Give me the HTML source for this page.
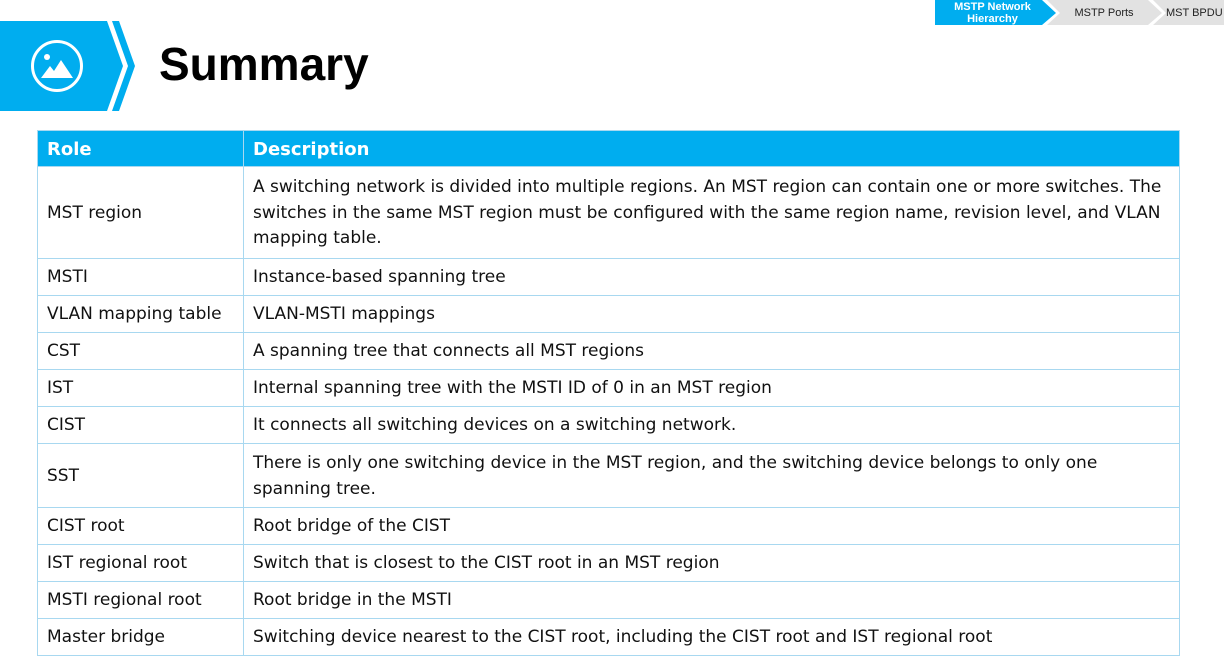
<!DOCTYPE html>
<html><head><meta charset="utf-8"><style>
body{margin:0;width:1224px;height:672px;background:#fff;font-family:"Liberation Sans","DejaVu Sans",sans-serif;position:relative;overflow:hidden}
.t{position:absolute;font-size:11px;color:#222;display:flex;align-items:center;justify-content:center;text-align:center;line-height:12px}
table{position:absolute;left:37px;top:130px;width:1143px;border-collapse:collapse;font-family:"DejaVu Sans",sans-serif;font-size:17px;color:#111}
td,th{border:1.5px solid #a8d8f0;padding:2px 9px 0 9px;text-align:left;vertical-align:middle;line-height:25.5px}
th{background:#00adef;color:#fff;font-weight:bold;font-size:18px;height:33px}
td:first-child,th:first-child{width:187px}
</style></head><body>
<svg style="position:absolute;left:0;top:0" width="1224" height="120">
<polygon points="935,0 1042,0 1056,13 1042,25 935,25" fill="#00adef"/>
<polygon points="1047,0 1148,0 1162,13 1148,25 1047,25 1060,13" fill="#e2e2e2"/>
<polygon points="1153,0 1224,0 1224,25 1153,25 1166,13" fill="#e2e2e2"/>
<polygon points="0,21 107,21 123,66 107,111 0,111" fill="#00adef"/>
<polygon points="112,21 119,21 135,66 119,111 112,111 128,66" fill="#00adef"/>
<circle cx="57" cy="66" r="24.5" fill="none" stroke="#fff" stroke-width="3"/>
<circle cx="47" cy="57" r="3" fill="#fff"/>
<polygon points="41,78 50,66 54,71 61,60 73,78" fill="#fff"/>
</svg>
<div class="t" style="left:940px;top:0;width:105px;height:25px;color:#fff;font-weight:bold">MSTP Network<br>Hierarchy</div>
<div class="t" style="left:1060px;top:0;width:88px;height:25px">MSTP Ports</div>
<div class="t" style="left:1166px;top:0;width:60px;height:25px;justify-content:flex-start">MST BPDU</div>
<div style="position:absolute;left:159px;top:37px;font-size:46px;font-weight:bold;color:#000">Summary</div>
<table>
<tr><th>Role</th><th>Description</th></tr>
<tr style="height:92px"><td>MST region</td><td>A switching network is divided into multiple regions. An MST region can contain one or more switches. The switches in the same MST region must be configured with the same region name, revision level, and VLAN mapping table.</td></tr>
<tr style="height:37px"><td>MSTI</td><td>Instance-based spanning tree</td></tr>
<tr style="height:37px"><td>VLAN mapping table</td><td>VLAN-MSTI mappings</td></tr>
<tr style="height:37px"><td>CST</td><td>A spanning tree that connects all MST regions</td></tr>
<tr style="height:37px"><td>IST</td><td>Internal spanning tree with the MSTI ID of 0 in an MST region</td></tr>
<tr style="height:37px"><td>CIST</td><td>It connects all switching devices on a switching network.</td></tr>
<tr style="height:64px"><td>SST</td><td>There is only one switching device in the MST region, and the switching device belongs to only one spanning tree.</td></tr>
<tr style="height:37px"><td>CIST root</td><td>Root bridge of the CIST</td></tr>
<tr style="height:37px"><td>IST regional root</td><td>Switch that is closest to the CIST root in an MST region</td></tr>
<tr style="height:37px"><td>MSTI regional root</td><td>Root bridge in the MSTI</td></tr>
<tr style="height:37px"><td>Master bridge</td><td>Switching device nearest to the CIST root, including the CIST root and IST regional root</td></tr>
</table>
</body></html>
